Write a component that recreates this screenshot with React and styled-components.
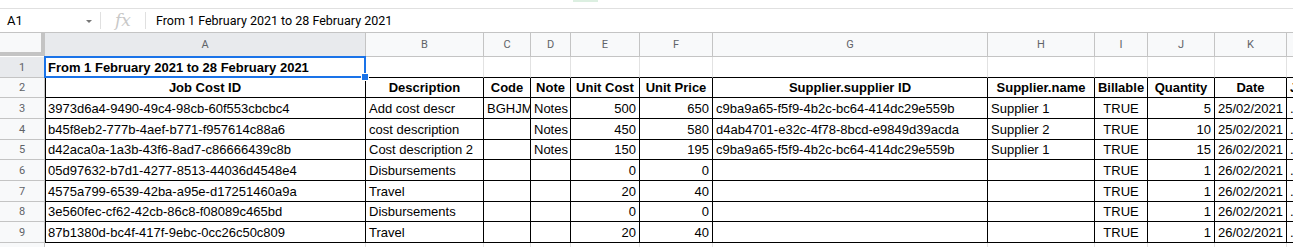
import React from 'react';
import { styled, createGlobalStyle } from 'styled-components';

const GlobalStyle = createGlobalStyle`
  html, body {
    margin: 0;
    padding: 0;
    background: #fff;
    overflow: hidden;
  }
  body {
    font-family: "Liberation Sans", Arial, sans-serif;
  }
`;

const COLS = ['A', 'B', 'C', 'D', 'E', 'F', 'G', 'H', 'I', 'J', 'K', 'L'];
const WIDTHS = [45, 321, 118, 47, 40, 69, 73, 275, 107, 53, 67, 72, 100];
const ROW_HEIGHTS = [24, 21, 20, 21, 21, 20, 21, 21, 20, 21, 20];

// alignment per column for data rows
const ALIGN = ['left', 'left', 'left', 'left', 'right', 'right', 'left', 'left', 'center', 'right', 'right', 'left'];

const TITLE = 'From 1 February 2021 to 28 February 2021';

const HEADERS = [
  'Job Cost ID', 'Description', 'Code', 'Note', 'Unit Cost', 'Unit Price',
  'Supplier.supplier ID', 'Supplier.name', 'Billable', 'Quantity', 'Date', 'J',
];

const ROWS = [
  ['3973d6a4-9490-49c4-98cb-60f553cbcbc4', 'Add cost descr', 'BGHJM', 'Notes', '500', '650', 'c9ba9a65-f5f9-4b2c-bc64-414dc29e559b', 'Supplier 1', 'TRUE', '5', '25/02/2021', '.'],
  ['b45f8eb2-777b-4aef-b771-f957614c88a6', 'cost description', '', 'Notes', '450', '580', 'd4ab4701-e32c-4f78-8bcd-e9849d39acda', 'Supplier 2', 'TRUE', '10', '25/02/2021', '.'],
  ['d42aca0a-1a3b-43f6-8ad7-c86666439c8b', 'Cost description 2', '', 'Notes', '150', '195', 'c9ba9a65-f5f9-4b2c-bc64-414dc29e559b', 'Supplier 1', 'TRUE', '15', '26/02/2021', '.'],
  ['05d97632-b7d1-4277-8513-44036d4548e4', 'Disbursements', '', '', '0', '0', '', '', 'TRUE', '1', '26/02/2021', '.'],
  ['4575a799-6539-42ba-a95e-d17251460a9a', 'Travel', '', '', '20', '40', '', '', 'TRUE', '1', '26/02/2021', '.'],
  ['3e560fec-cf62-42cb-86c8-f08089c465bd', 'Disbursements', '', '', '0', '0', '', '', 'TRUE', '1', '26/02/2021', '.'],
  ['87b1380d-bc4f-417f-9ebc-0cc26c50c809', 'Travel', '', '', '20', '40', '', '', 'TRUE', '1', '26/02/2021', '.'],
];

function App() {
  return (
    <>
      <GlobalStyle />
      <Page>
        <TopStrip>
          <GreenTab />
        </TopStrip>
        <FormulaBar>
          <NameBox>
            <span>A1</span>
            <Caret />
          </NameBox>
          <Divider />
          <FxIcon>fx</FxIcon>
          <Divider />
          <FormulaText>{TITLE}</FormulaText>
        </FormulaBar>

        <Sheet>
          <Corner />
          {COLS.map((c, i) => (
            <ColHeader key={c} $active={i === 0}>{c}</ColHeader>
          ))}

          <RowHeader $active>1</RowHeader>
          <Cell $bold $underline $selected>
            {TITLE}
            <Handle />
          </Cell>
          {COLS.slice(1).map((c) => (
            <Cell key={c} $underline />
          ))}

          <RowHeader>2</RowHeader>
          {HEADERS.map((h, i) => (
            <Cell key={h} $boxed $first={i === 0} $bold $align={i === 11 ? 'left' : 'center'}>
              {h}
            </Cell>
          ))}

          {ROWS.map((row, r) => (
            <React.Fragment key={r}>
              <RowHeader>{r + 3}</RowHeader>
              {row.map((v, i) => (
                <Cell key={i} $boxed $first={i === 0} $align={ALIGN[i]}>
                  {v}
                </Cell>
              ))}
            </React.Fragment>
          ))}

          <RowHeader>10</RowHeader>
          {COLS.map((c) => (
            <Cell key={c} />
          ))}
        </Sheet>
      </Page>
    </>
  );
}

const Page = styled.div`
  width: 1293px;
  height: 247px;
  overflow: hidden;
  background: #fff;
`;

const TopStrip = styled.div`
  height: 8px;
  border-bottom: 1px solid #e0e0e0;
  display: flex;
`;

const GreenTab = styled.div`
  margin-left: 573px;
  width: 25px;
  height: 2px;
  background: #dcefe1;
`;

const FormulaBar = styled.div`
  height: 23px;
  border-bottom: 1px solid #c4c4c4;
  display: flex;
  align-items: center;
  font-family: Roboto, "Liberation Sans", Arial, sans-serif;
`;

const NameBox = styled.div`
  width: 100px;
  box-sizing: border-box;
  padding: 0 8px 0 7px;
  display: flex;
  align-items: center;
  justify-content: space-between;
  font-size: 13px;
  color: #000;
`;

const Caret = styled.span`
  width: 0;
  height: 0;
  border-left: 3px solid transparent;
  border-right: 3px solid transparent;
  border-top: 3px solid #777;
  margin-top: 1px;
`;

const Divider = styled.div`
  width: 1px;
  height: 17px;
  background: #e0e0e0;
`;

const FxIcon = styled.span`
  width: 44px;
  text-align: center;
  font-family: "DejaVu Serif", "Liberation Serif", serif;
  font-style: italic;
  font-size: 17px;
  color: #c8c8c8;
  line-height: 1;
`;

const FormulaText = styled.span`
  margin-left: 10px;
  font-size: 12.5px;
  color: #000;
  white-space: nowrap;
`;

const Sheet = styled.div`
  display: grid;
  grid-template-columns: ${WIDTHS.map((w) => w + 'px').join(' ')};
  grid-template-rows: ${ROW_HEIGHTS.map((h) => h + 'px').join(' ')};
`;

const Corner = styled.div`
  box-sizing: border-box;
  background: #f8f9fa;
  border-right: 4px solid #c4c4c4;
  border-bottom: 4px solid #c4c4c4;
  margin-bottom: 1px;
`;

const ColHeader = styled.div`
  box-sizing: border-box;
  background: ${({ $active }) => ($active ? '#e8eaed' : '#f8f9fa')};
  border-right: 1px solid #c4c4c4;
  border-bottom: 1px solid #c4c4c4;
  display: flex;
  align-items: center;
  justify-content: center;
  font-family: Roboto, "Liberation Sans", Arial, sans-serif;
  font-size: 11px;
  color: #5f6368;
`;

const RowHeader = styled.div`
  box-sizing: border-box;
  background: ${({ $active }) => ($active ? '#e8eaed' : '#f8f9fa')};
  border-right: 1px solid #c4c4c4;
  border-bottom: 1px solid #c4c4c4;
  display: flex;
  align-items: center;
  justify-content: center;
  font-family: Roboto, "Liberation Sans", Arial, sans-serif;
  font-size: 11px;
  color: #5f6368;
`;

const Cell = styled.div`
  position: relative;
  box-sizing: border-box;
  display: flex;
  align-items: center;
  justify-content: ${({ $align }) =>
    $align === 'right' ? 'flex-end' : $align === 'center' ? 'center' : 'flex-start'};
  padding: 0 3px 0 ${({ $first }) => ($first ? '2px' : '3px')};
  border-right: 1px solid ${({ $boxed }) => ($boxed ? '#000' : '#e2e2e2')};
  border-bottom: 1px solid ${({ $boxed, $underline }) => ($boxed || $underline ? '#000' : '#e2e2e2')};
  border-left: ${({ $first }) => ($first ? '1px solid #000' : 'none')};
  font-size: 13px;
  font-weight: ${({ $bold }) => ($bold ? 700 : 400)};
  color: #000;
  white-space: nowrap;
  overflow: ${({ $selected }) => ($selected ? 'visible' : 'hidden')};
  z-index: ${({ $selected }) => ($selected ? 2 : 'auto')};

  ${({ $selected }) =>
    $selected &&
    `
    &::after {
      content: '';
      position: absolute;
      top: -1px;
      left: -1px;
      right: -1px;
      bottom: -1px;
      border: 2px solid #1a73e8;
      pointer-events: none;
    }
  `}
`;

const Handle = styled.span`
  position: absolute;
  right: -4px;
  bottom: -4px;
  width: 6px;
  height: 6px;
  background: #1a73e8;
  border: 1px solid #fff;
  z-index: 3;
`;

export default App;
